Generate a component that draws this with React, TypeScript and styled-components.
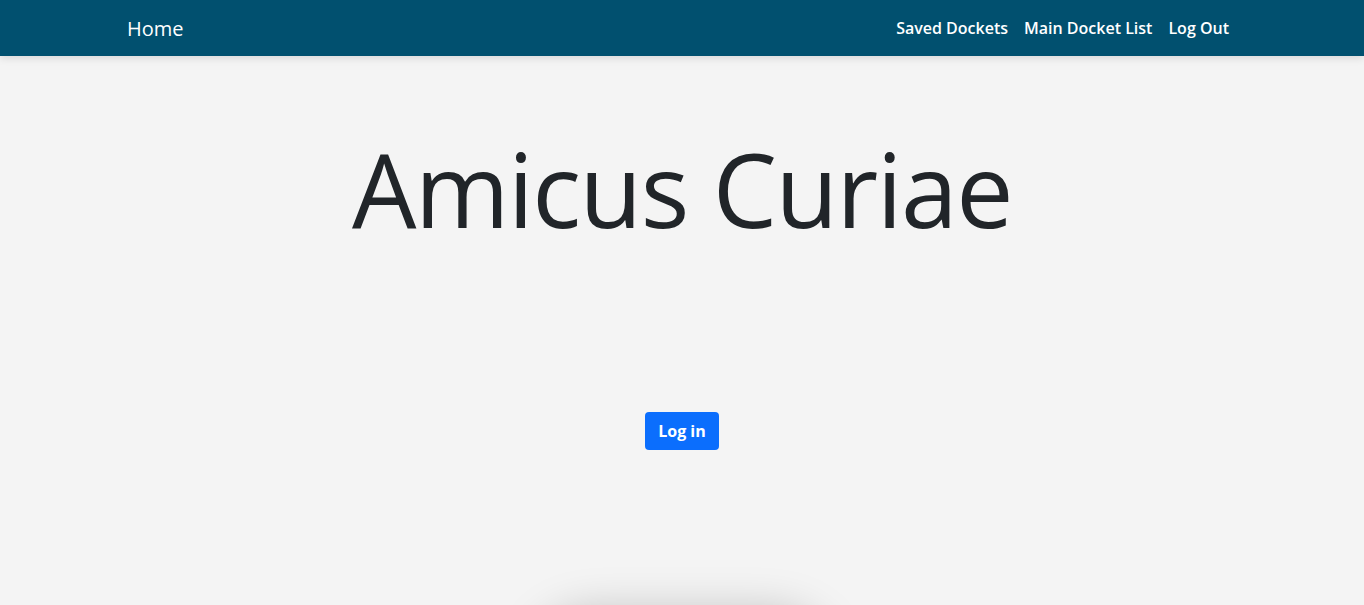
import React from "react";
import styled, { createGlobalStyle } from "styled-components";

const Global = createGlobalStyle`
  html, body { margin: 0; padding: 0; }
  body {
    background: #f4f4f4;
    font-family: "Open Sans", "Noto Sans", sans-serif;
    color: #212529;
    overflow: hidden;
  }
`;

const Nav = styled.nav`
  height: 56px;
  background: #01506f;
  box-shadow: 0 2px 8px rgba(0, 0, 0, 0.12);
  position: relative;
  z-index: 2;
`;

const NavInner = styled.div`
  max-width: 1140px;
  margin: 0 auto;
  padding: 0 15px 0 12px;
  height: 100%;
  display: flex;
  align-items: center;
  justify-content: space-between;
  box-sizing: border-box;
`;

const Brand = styled.a`
  color: #fff;
  font-size: 20px;
  font-weight: 500;
  text-decoration: none;
  padding-left: 3px;
`;

const Links = styled.div`
  display: flex;
`;

const NavLink = styled.a`
  color: #fff;
  font-size: 16px;
  font-weight: 600;
  padding: 8px;
  text-decoration: none;
  letter-spacing: 0px;
`;

const Main = styled.main`
  display: flex;
  flex-direction: column;
  align-items: center;
`;

const Title = styled.h1`
  margin: 72px 0 0;
  font-size: 102px;
  font-weight: 400;
  line-height: 1.2;
  letter-spacing: -1.5px;
`;

const Button = styled.button`
  margin-top: 162px;
  height: 38px;
  padding: 0 13px;
  background: #0b6efd;
  color: #fff;
  border: none;
  border-radius: 4px;
  font-family: inherit;
  font-size: 16px;
  font-weight: 700;
  cursor: pointer;
`;

const Card = styled.div`
  margin-top: 162px;
  width: 300px;
  height: 200px;
  background: #f4f4f4;
  border-radius: 60px;
  box-shadow: 0 0 45px rgba(0, 0, 0, 0.22);
`;

export default function App() {
  return (
    <>
      <Global />
      <Nav>
        <NavInner>
          <Brand href="#">Home</Brand>
          <Links>
            <NavLink href="#">Saved Dockets</NavLink>
            <NavLink href="#">Main Docket List</NavLink>
            <NavLink href="#">Log Out</NavLink>
          </Links>
        </NavInner>
      </Nav>
      <Main>
        <Title>Amicus Curiae</Title>
        <Button>Log in</Button>
        <Card />
      </Main>
    </>
  );
}
